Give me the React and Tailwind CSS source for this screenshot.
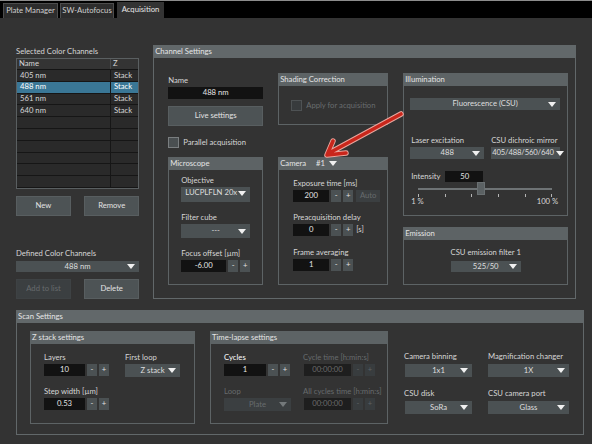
import React from 'react';

// Acquisition tab of the microscope control software

const Caret = ({ dim }) => (
  <svg width="8" height="5" viewBox="0 0 8 5" className="shrink-0">
    <path d="M0 0H8L4 5Z" fill={dim ? '#74797b' : '#f0f0f0'} />
  </svg>
);

const Dropdown = ({ value, className = '', disabled }) => (
  <div
    className={`flex items-center pr-[4px] ${
      disabled ? 'bg-[#3b3f41] text-[#686c6e]' : 'bg-[#4b5153] text-[#dedede]'
    } ${className}`}
  >
    <span className="flex-1 whitespace-nowrap text-center">{value}</span>
    <Caret dim={disabled} />
  </div>
);

const Box = ({ title, className = '', bodyClass = '', children }) => (
  <div className={`flex flex-col ${className}`}>
    <div className="flex h-[13px] shrink-0 items-center bg-[#5d6365] px-[2px] text-[#e4e4e4]">{title}</div>
    <div className={`flex-1 border border-t-0 border-[#5d6365] ${bodyClass}`}>{children}</div>
  </div>
);

const Small = ({ children, disabled }) => (
  <div
    className={`flex w-[10px] items-center justify-center ${
      disabled ? 'bg-[#383c3e] text-[#5e6264]' : 'bg-[#4b5153] text-[#e0e0e0]'
    }`}
  >
    {children}
  </div>
);

const Spin = ({ value, inputClass, disabled, children }) => (
  <div className="flex h-[12px] gap-[2px]">
    <div
      className={`flex items-center justify-center ${inputClass} ${
        disabled ? 'bg-[#1e1e1e] text-[#6a6a6a]' : 'bg-[#121212] text-[#e4e4e4]'
      }`}
    >
      {value}
    </div>
    <Small disabled={disabled}>-</Small>
    <Small disabled={disabled}>+</Small>
    {children}
  </div>
);

const Label = ({ children, className = '' }) => (
  <div className={`flex h-[13px] items-center whitespace-nowrap ${className}`}>{children}</div>
);

const Button = ({ children, disabled, className = '' }) => (
  <div
    className={`flex items-center justify-center border ${
      disabled
        ? 'border-[#3e4244] bg-[#3b3f41] text-[#676b6d]'
        : 'border-[#585e60] bg-[#4d5355] text-[#e2e2e2]'
    } ${className}`}
  >
    {children}
  </div>
);

const Check = ({ disabled }) => (
  <div
    className={`h-[11px] w-[11px] shrink-0 border ${
      disabled ? 'border-[#4e5254] bg-[#383b3d]' : 'border-[#7a7e80] bg-[#4a4f51]'
    }`}
  />
);

const channels = [
  { name: '405 nm', z: 'Stack' },
  { name: '488 nm', z: 'Stack', selected: true },
  { name: '561 nm', z: 'Stack' },
  { name: '640 nm', z: 'Stack' },
  {}, {}, {}, {}, {}, {},
];

const App = () => {
  return (
    <div className="relative h-[444px] w-[592px] overflow-hidden bg-[#333333] font-['Lato','Liberation_Sans',sans-serif] text-[7.7px] text-[#d6d6d6]">
      {/* tabs */}
      <div className="flex h-[18px] items-end gap-[2px] border-t border-[#8c8c8c] bg-black pl-[3px]">
        <div className="flex h-[15px] w-[55px] items-center justify-center border border-b-0 border-[#4d4d4d] bg-[#2d2d2d] text-[#cfcfcf]">
          Plate Manager
        </div>
        <div className="flex h-[15px] w-[54px] items-center justify-center border border-b-0 border-[#4d4d4d] bg-[#2d2d2d] text-[#cfcfcf]">
          SW-Autofocus
        </div>
        <div className="ml-[1px] flex h-[16px] w-[47px] items-start justify-center bg-[#333333] pt-[2px] text-[#e6e6e6]">
          Acquisition
        </div>
      </div>

      <div className="px-[16px] pt-[27px]">
        <div className="flex h-[254px] gap-[14px]">
          {/* left column */}
          <div className="flex w-[125px] flex-col">
            <Label>Selected Color Channels</Label>
            <div className="h-[131px] border border-[#5a5f61] bg-[#2a2a2a]">
              <div className="flex h-[11px] border-b border-[#151515] bg-[#343434]">
                <div className="flex w-[94px] items-center border-r border-[#4a4a4a] pl-[2px]">Name</div>
                <div className="flex flex-1 items-center pl-[2px]">Z</div>
              </div>
              {channels.map((c, i) => (
                <div
                  key={i}
                  className={`flex h-[11.8px] border-b border-[#161616] ${
                    c.selected ? 'bg-[#3a7796] text-white' : ''
                  }`}
                >
                  <div className="flex w-[94px] items-center border-r border-[#161616] pl-[3px]">{c.name}</div>
                  <div className="flex flex-1 items-center pl-[3px]">{c.z}</div>
                </div>
              ))}
            </div>
            <div className="mt-[7px] flex h-[20px] justify-between">
              <Button className="w-[55px]">New</Button>
              <Button className="w-[55px]">Remove</Button>
            </div>
            <Label className="mt-[31px]">Defined Color Channels</Label>
            <Dropdown value="488 nm" className="mt-[1px] h-[11px] pl-[12px]" />
            <div className="mt-[7px] flex h-[20px] justify-between">
              <Button disabled className="w-[55px]">Add to list</Button>
              <Button className="w-[55px]">Delete</Button>
            </div>
          </div>

          {/* channel settings */}
          <div className="flex w-[429px] flex-col">
            <div className="flex h-[13px] items-center bg-[#62686a] pl-[2px] text-[#e6e6e6]">Channel Settings</div>
            <div className="grid flex-1 grid-cols-[95px_110px_165px] items-start gap-x-[15px] border border-t-0 border-[#62686a] pl-[14px] pt-[15px]">
              {/* column 1 */}
              <div className="flex flex-col">
                <Label className="mt-[1px]">Name</Label>
                <div className="flex h-[12px] items-center justify-center bg-[#121212] text-[#e4e4e4]">488 nm</div>
                <Button className="mt-[7px] h-[20px]">Live settings</Button>
                <div className="mt-[11px] flex h-[11px] items-center gap-[4px]">
                  <Check />
                  <span>Parallel acquisition</span>
                </div>
                <Box title="Microscope" className="mt-[9px] h-[128px]" bodyClass="pl-[12px] pt-[4px]">
                  <Label>Objective</Label>
                  <div className="flex h-[15px] w-[69px] flex-col overflow-hidden bg-[#4b5153] text-[#dedede]">
                    <div className="flex h-[12px] shrink-0 items-center pr-[4px] pl-[3px]">
                      <span className="flex-1 text-center">LUCPLFLN 20x</span>
                      <Caret />
                    </div>
                    <div className="pl-[22px] text-[6px] leading-[6px] text-[#bfbfbf]">---</div>
                  </div>
                  <Label className="mt-[9px]">Filter cube</Label>
                  <Dropdown value="---" className="h-[14px] w-[69px] pl-[12px]" />
                  <Label className="mt-[9px]">Focus offset [µm]</Label>
                  <Spin value="-6.00" inputClass="w-[45px]" />
                </Box>
              </div>

              {/* column 2 */}
              <div className="flex flex-col">
                <Box title="Shading Correction" className="h-[52px]" bodyClass="pl-[12px] pt-[14px]">
                  <div className="flex items-center gap-[4px] text-[#686c6e]">
                    <Check disabled />
                    <span>Apply for acquisition</span>
                  </div>
                </Box>
                <Box
                  title={
                    <div className="flex items-center">
                      <span>Camera</span>
                      <span className="ml-[10px]">#1</span>
                      <span className="ml-[4px]">
                        <Caret />
                      </span>
                    </div>
                  }
                  className="mt-[32px] h-[128px]"
                  bodyClass="pl-[14px] pt-[7px]"
                >
                  <Label>Exposure time [ms]</Label>
                  <Spin value="200" inputClass="w-[36px]">
                    <div className="ml-[1px] flex w-[24px] items-center justify-center bg-[#3b3f41] text-[#676b6d]">Auto</div>
                  </Spin>
                  <Label className="mt-[9px]">Preacquisition delay</Label>
                  <Spin value="0" inputClass="w-[36px]">
                    <span className="ml-[1px] flex items-center">[s]</span>
                  </Spin>
                  <Label className="mt-[10px]">Frame averaging</Label>
                  <Spin value="1" inputClass="w-[36px]" />
                </Box>
              </div>

              {/* column 3 */}
              <div className="flex flex-col">
                <Box title="Illumination" className="h-[143px]" bodyClass="pl-[6px] pr-[7px]">
                  <Dropdown value="Fluorescence (CSU)" className="mt-[12px] h-[12px] pl-[12px]" />
                  <div className="mt-[24px] flex">
                    <Label className="w-[81px] pl-[1px]">Laser excitation</Label>
                    <Label>CSU dichroic mirror</Label>
                  </div>
                  <div className="flex h-[12px] gap-[7px]">
                    <Dropdown value="488" className="w-[74px] pl-[12px]" />
                    <Dropdown value="405/488/560/640" className="w-[69px] gap-[2px] pl-[1px] !pr-[2px] tracking-[-0.15px]" />
                  </div>
                  <div className="mt-[12px] flex h-[11px] items-center pl-[1px]">
                    <span className="w-[34px]">Intensity</span>
                    <div className="flex h-full w-[38px] items-center bg-[#121212] pl-[15px] text-[#e4e4e4]">50</div>
                  </div>
                  <div className="px-[8px]">
                    <div className="relative h-[15px]">
                      <div className="absolute left-0 right-0 top-[6px] h-[2px] bg-[#6e7375]" />
                      <div className="absolute left-[59px] top-0 h-[13px] w-[8px] border border-[#6a7072] bg-[#5b6163]" />
                      <div className="absolute left-0 right-0 top-[12px] flex justify-between">
                        {[0, 1, 2, 3, 4, 5].map((t) => (
                          <div key={t} className="h-[3px] w-[1px] bg-[#b5b5b5]" />
                        ))}
                      </div>
                    </div>
                  </div>
                  <div className="flex h-[10px] items-center justify-between pl-[1px] pr-[2px]">
                    <span>1 %</span>
                    <span>100 %</span>
                  </div>
                </Box>
                <Box title="Emission" className="mt-[11px] h-[58px]" bodyClass="flex flex-col items-center pt-[6px]">
                  <Label>CSU emission filter 1</Label>
                  <Dropdown value="525/50" className="mt-[2px] h-[11px] w-[70px] pl-[12px]" />
                </Box>
              </div>
            </div>
          </div>
        </div>

        {/* scan settings */}
        <div className="mt-[11px] flex h-[125px] w-[568px] flex-col">
          <div className="flex h-[13px] items-center bg-[#62686a] pl-[2px] text-[#e6e6e6]">Scan Settings</div>
          <div className="flex flex-1 items-start border border-t-0 border-[#62686a] pl-[13px] pt-[8px]">
            <Box title="Z stack settings" className="h-[93px] w-[165px]" bodyClass="flex pl-[13px] pt-[7px]">
              <div className="w-[81px]">
                <Label>Layers</Label>
                <Spin value="10" inputClass="w-[41px]" />
                <Label className="mt-[9px]">Step width [µm]</Label>
                <Spin value="0.53" inputClass="w-[41px]" />
              </div>
              <div>
                <Label className="h-[11px]">First loop</Label>
                <Dropdown value="Z stack" className="h-[13px] w-[55px] pl-[12px]" />
              </div>
            </Box>
            <Box title="Time-lapse settings" className="ml-[15px] h-[93px] w-[178px]" bodyClass="flex pl-[13px] pt-[7px]">
              <div className="w-[79px]">
                <Label className="text-white">Cycles</Label>
                <Spin value="1" inputClass="w-[42px]" />
                <Label className="mt-[9px] h-[11px] text-[#676b6d]">Loop</Label>
                <Dropdown value="Plate" disabled className="h-[13px] w-[67px] pl-[12px]" />
              </div>
              <div>
                <Label className="text-[#676b6d]">Cycle time [h:min:s]</Label>
                <Spin value="00:00:00" disabled inputClass="w-[47px] ml-[1px]" />
                <Label className="mt-[9px] text-[#676b6d]">All cycles time [h:min:s]</Label>
                <Spin value="00:00:00" disabled inputClass="w-[47px] ml-[1px]" />
              </div>
            </Box>
            <div className="ml-[16px] mt-[19px] grid grid-cols-[68px_81px] gap-x-[16px]">
              <Label className="h-[11px]">Camera binning</Label>
              <Label className="h-[11px]">Magnification changer</Label>
              <Dropdown value="1x1" className="ml-[1px] mt-[1px] h-[13px] pl-[12px]" />
              <Dropdown value="1X" className="mt-[1px] h-[13px] pl-[12px]" />
              <Label className="mt-[10px] h-[11px]">CSU disk</Label>
              <Label className="mt-[10px] h-[11px]">CSU camera port</Label>
              <Dropdown value="SoRa" className="ml-[1px] mt-[1px] h-[13px] pl-[12px]" />
              <Dropdown value="Glass" className="mt-[1px] h-[13px] pl-[12px]" />
            </div>
          </div>
        </div>
      </div>

      {/* red annotation arrow */}
      <svg className="pointer-events-none absolute left-0 top-0" width="592" height="444">
        <g fill="none" strokeLinecap="round" strokeLinejoin="round">
          <path d="M401 114 L331 152 M333 141 L327 155 L346 153" stroke="#e9a79f" strokeWidth="5.5" />
          <path d="M401 114 L331 152 M333 141 L327 155 L346 153" stroke="#c9261b" strokeWidth="3.6" />
        </g>
      </svg>
    </div>
  );
};

export default App;
